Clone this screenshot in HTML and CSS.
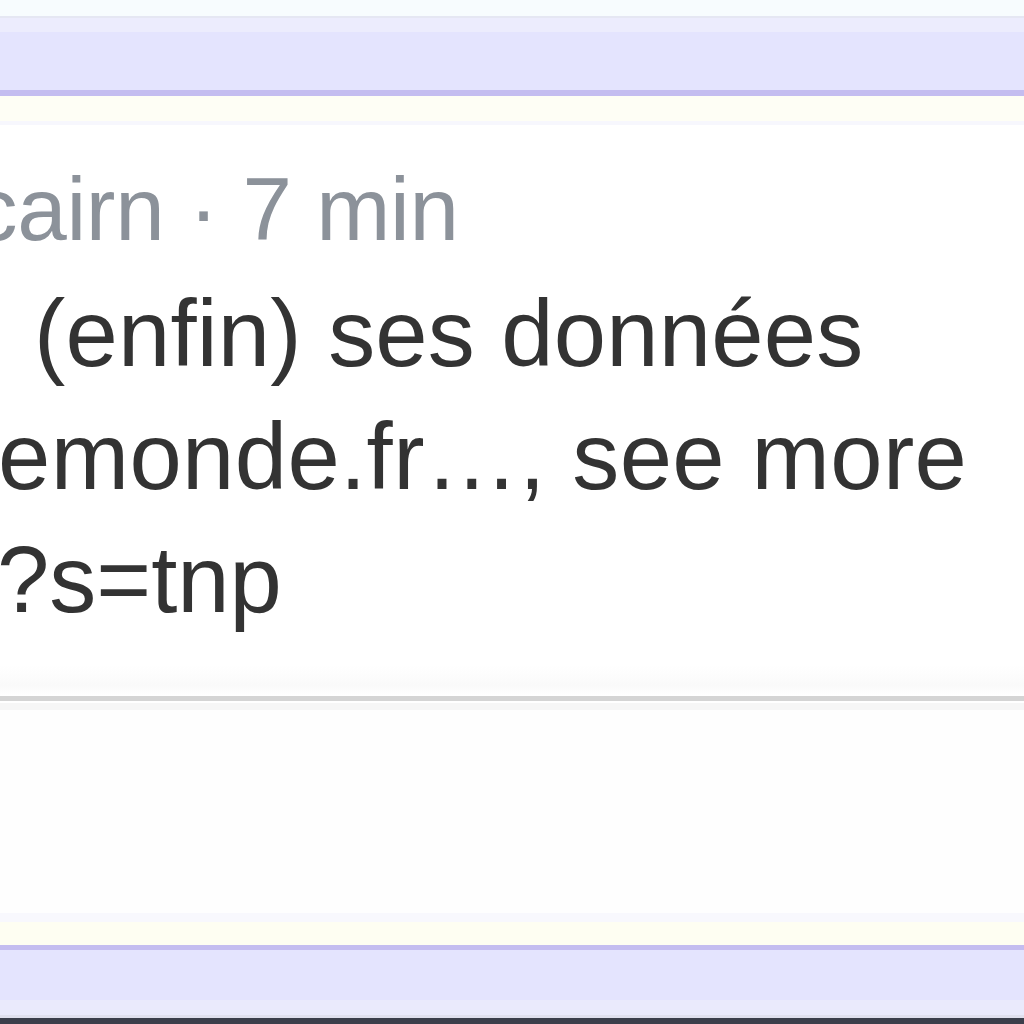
FILE: index.html
```html
<!DOCTYPE html>
<html lang="fr">
<head>
    <meta charset="UTF-8">
    <meta name="viewport" content="width=device-width, initial-scale=1.0">
    <title>Timeline</title>
    <link rel="stylesheet" href="styles.css">
</head>
<body>
    <!-- Window top -->
    <div class="top-strip"></div>
    <div class="bar bar-top"></div>
    <div class="gap gap-top"></div>

    <!-- Post -->
    <article class="post">
        <div class="post-meta">cairn · 7 min</div>
        <p class="post-text">
            <span class="line line-1">(enfin) ses données</span>
            <span class="line line-2">emonde.fr…, see more</span>
            <span class="line line-3">?s=tnp</span>
        </p>
    </article>

    <!-- Empty row below the post -->
    <div class="post-empty"></div>

    <!-- Window bottom -->
    <div class="gap gap-bottom"></div>
    <div class="bar bar-bottom"></div>
    <div class="taskbar"></div>
</body>
</html>
```
FILE: styles.css
```css
/* General Styles */
html,
body {
    margin: 0;
    height: 1024px;
    overflow: hidden;
    background: #fff;
    font-family: "Liberation Sans", Arial, sans-serif;
}

/* Top area */
.top-strip {
    height: 16px;
    background: #f7fcfe;
    border-bottom: 2px solid #e5e7f3;
}

.bar {
    background: #e4e4fe;
}

.bar-top {
    height: 72px;
    background: linear-gradient(#ececfd 0, #ececfd 14px, #e4e4fe 14px);
    border-bottom: 6px solid #c4bdf0;
}

.gap-top {
    height: 25px;
    background: #fefef5;
    border-bottom: 4px solid #f7f7fd;
}

/* Post */
.post {
    padding: 21px 0 55px;
    background: linear-gradient(#fff 0, #fff 540px, #fafafa 560px, #fff 571px);
    border-bottom: 5px solid #d4d4d4;
    white-space: nowrap;
}

.post-meta {
    font-size: 89px;
    line-height: 126px;
    color: #8c929a;
    margin-left: -27px;
    letter-spacing: -0.3px;
}

.post-text {
    margin: 0;
    font-size: 94px;
    line-height: 123px;
    color: #333;
}

.line {
    display: block;
}

.line-1 {
    margin-left: 34px;
    letter-spacing: 0.2px;
}

.line-2 {
    margin-left: -2px;
    letter-spacing: 0.4px;
}

.line-3 {
    margin-left: -3px;
}

.post-empty {
    height: 212px;
    background: linear-gradient(#fff 0, #fff 2px, #f6f6f6 2px, #f6f6f6 9px, #fefefe 9px);
}

/* Bottom area */
.gap-bottom {
    height: 32px;
    background: linear-gradient(#f8f8fd 0, #f8f8fd 9px, #fefef2 9px);
}

.bar-bottom {
    height: 68px;
    background: linear-gradient(#e4e4fe 0, #e4e4fe 50px, #eaeafc 50px, #eaeafc 65px, #e0e0ee 65px);
    border-top: 5px solid #c4bdf0;
}

.taskbar {
    height: 6px;
    background: #3b3e4b;
}
```
